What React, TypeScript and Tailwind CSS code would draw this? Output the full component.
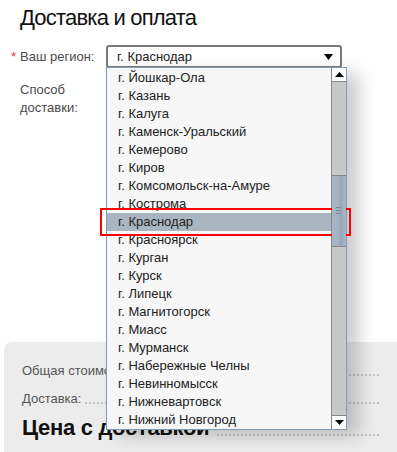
const CITIES = [
    "Йошкар-Ола",
    "Казань",
    "Калуга",
    "Каменск-Уральский",
    "Кемерово",
    "Киров",
    "Комсомольск-на-Амуре",
    "Кострома",
    "Краснодар",
    "Красноярск",
    "Курган",
    "Курск",
    "Липецк",
    "Магнитогорск",
    "Миасс",
    "Мурманск",
    "Набережные Челны",
    "Невинномысск",
    "Нижневартовск",
    "Нижний Новгород",
]

const SELECTED = "Краснодар"

function Leader({ label, className }: { label: string; className?: string }) {
    return (
        <div className={`flex items-end gap-1 ${className ?? ""}`}>
            <span className="whitespace-nowrap">{label}</span>
            <span className="mb-[4px] flex-1 border-b-2 border-dotted border-[#c4c4c4]" />
        </div>
    )
}

function CityDropdown() {
    return (
        <div className="absolute left-0 top-[22px] z-10 flex h-[363px] w-[241px] border border-[#7f9db9] bg-[#f7f7f7] shadow-[12px_6px_16px_rgba(0,0,0,0.2)]">
            <ul className="flex-1 pt-[1px]">
                {CITIES.map((city) => (
                    <li
                        key={city}
                        className={`flex h-[18px] items-center pl-[11px] text-[13px] text-[#222] ${
                            city === SELECTED ? "relative bg-[#a9b5c1]" : ""
                        }`}
                    >
                        г. {city}
                        {city === SELECTED && (
                            <span className="pointer-events-none absolute -left-[7px] -right-[20px] -top-[5px] -bottom-[5px] border-2 border-[#f00]" />
                        )}
                    </li>
                ))}
            </ul>
            {/* scrollbar */}
            <div className="flex w-[15px] flex-col border-l border-[#888] bg-[#c8c8c8]">
                <div className="flex h-[14px] items-center justify-center border-b border-[#888] bg-white">
                    <svg width="9" height="5" viewBox="0 0 9 5">
                        <path d="M0 5 L4.5 0 L9 5 Z" fill="#000" />
                    </svg>
                </div>
                <div className="h-[93px]" />
                <div className="relative h-[72px] border-y border-[#888] bg-[#a5b4c5]">
                    <div className="absolute right-[3px] top-0 h-full w-[4px] bg-[#9aaabd]" />
                    <div className="absolute left-[4px] top-[31px] flex w-[5px] flex-col gap-[2px]">
                        <span className="h-px bg-[#7d8a99]" />
                        <span className="h-px bg-[#7d8a99]" />
                        <span className="h-px bg-[#7d8a99]" />
                    </div>
                </div>
                <div className="flex-1" />
                <div className="flex h-[14px] items-center justify-center border-t border-[#888] bg-white">
                    <svg width="9" height="5" viewBox="0 0 9 5">
                        <path d="M0 0 L9 0 L4.5 5 Z" fill="#000" />
                    </svg>
                </div>
            </div>
        </div>
    )
}

export default function App() {
    return (
        <div className="relative flex h-[452px] w-[397px] flex-col overflow-hidden bg-white font-['Liberation_Sans',Arial,sans-serif]">
            {/* Heading */}
            <h1 className="pl-5 pt-[3px] text-[22px] leading-[30px] tracking-[-0.8px] text-[#111]">Доставка и оплата</h1>

            {/* Region */}
            <div className="mt-[12px] flex items-center">
                <span className="w-[20px] pl-[11px] text-[13px] text-[#e33]">*</span>
                <span className="w-[86px] text-[13px] text-[#4a4a4a]">Ваш регион:</span>
                <div className="relative h-[23px] w-[236px]">
                    <div className="flex h-full items-center justify-between rounded-[3px] border-2 border-[#7a7a7a] pl-[9px] pr-[7px] text-[13px] text-[#222]">
                        <span>г. Краснодар</span>
                        <svg width="9" height="6" viewBox="0 0 9 6">
                            <path d="M0 0 L9 0 L4.5 6 Z" fill="#000" />
                        </svg>
                    </div>
                    <CityDropdown />
                </div>
            </div>

            {/* Delivery method */}
            <div className="mt-[13px] pl-5 text-[13px] leading-[18px] text-[#4a4a4a]">
                Способ
                <br />
                доставки:
            </div>

            {/* Totals */}
            <div className="ml-1 mt-auto h-[110px] rounded-tl-[8px] bg-[#ececec] px-[18px] pt-[20px] text-[13px] text-[#555]">
                <Leader label="Общая стоимость:" className="h-[18px]" />
                <Leader label="Доставка:" className="mt-[10px] h-[18px]" />
                <div className="mt-[5px] flex items-end gap-2">
                    <span className="whitespace-nowrap text-[22px] font-bold leading-[30px] tracking-[-0.3px] text-[#111]">Цена с доставкой</span>
                    <span className="mb-[7px] flex-1 border-b-2 border-dotted border-[#c4c4c4]" />
                </div>
            </div>
        </div>
    )
}
